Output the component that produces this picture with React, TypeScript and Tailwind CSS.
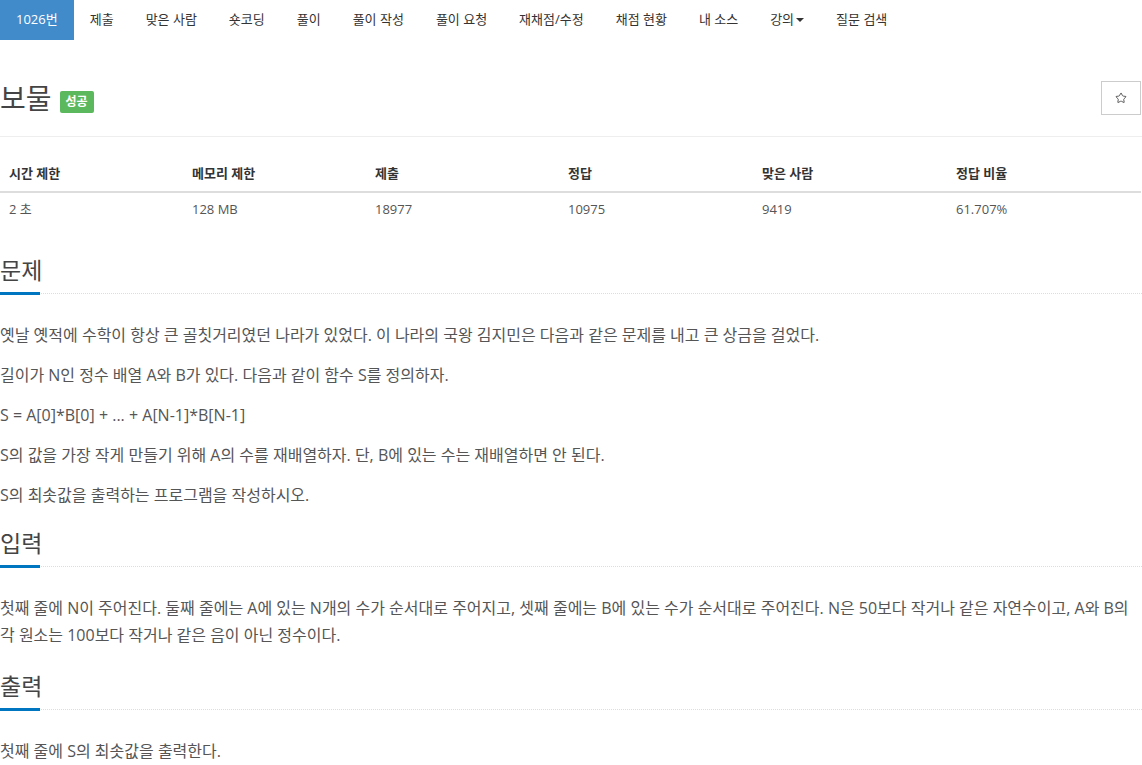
import { Star } from "lucide-react";

const navItems = [
  "제출",
  "맞은 사람",
  "숏코딩",
  "풀이",
  "풀이 작성",
  "풀이 요청",
  "재채점/수정",
  "채점 현황",
  "내 소스",
];

const stats = [
  { label: "시간 제한", value: "2 초", w: "w-[183px]" },
  { label: "메모리 제한", value: "128 MB", w: "w-[183px]" },
  { label: "제출", value: "18977", w: "w-[193px]" },
  { label: "정답", value: "10975", w: "w-[194px]" },
  { label: "맞은 사람", value: "9419", w: "w-[194px]" },
  { label: "정답 비율", value: "61.707%", w: "flex-1" },
];

function SectionTitle({ children }: { children: string }) {
  return (
    <div className="relative mb-[28px] border-b border-dotted border-[#ddd] pb-[6px]">
      <h2 className="text-[23px] leading-[33px] text-[#444]">{children}</h2>
      <span className="absolute bottom-[-2px] left-0 h-[3px] w-[40px] bg-[#0076c0]" />
    </div>
  );
}

function Para({ children }: { children: string }) {
  return <p className="mb-[13px] text-[16px] leading-[27px] text-[#555]">{children}</p>;
}

export default function App() {
  return (
    <div className="min-h-[765px] w-[1142px] bg-white font-['Open_Sans','Noto_Sans_CJK_KR',sans-serif] text-[#555]">
      <ul className="flex h-[40px] items-center text-[13px] text-[#333]">
        <li className="flex h-full items-center bg-[#428bca] px-[16px] text-white">1026번</li>
        {navItems.map((item) => (
          <li key={item} className="flex h-full items-center px-[16px]">
            {item}
          </li>
        ))}
        <li className="flex h-full items-center px-[16px]">
          강의
          <span className="ml-[2px] inline-block border-x-[4px] border-t-[4px] border-x-transparent border-t-[#333]" />
        </li>
        <li className="flex h-full items-center px-[16px]">질문 검색</li>
      </ul>

      <div className="mt-[40px] flex items-center justify-between border-b border-[#eee] pb-[20px]">
        <div className="flex items-center">
          <h1 className="text-[28px] leading-[36px] text-[#444]">보물</h1>
          <span className="ml-[8px] mt-[8px] rounded-[2px] bg-[#5cb85c] px-[6px] py-[3px] text-[12px] font-bold leading-[16px] text-white">
            성공
          </span>
        </div>
        <button className="mr-[1px] flex h-[34px] w-[40px] items-center justify-center border border-[#ccc] bg-white">
          <Star size={12} strokeWidth={1.6} className="text-[#333]" />
        </button>
      </div>

      <div className="mt-[18px] w-[1141px] text-[13px]">
        <div className="flex border-b-2 border-[#ddd]">
          {stats.map((s) => (
            <div key={s.label} className={`${s.w} px-[9px] py-[8px] font-bold leading-[20px] text-[#333]`}>
              {s.label}
            </div>
          ))}
        </div>
        <div className="flex">
          {stats.map((s) => (
            <div key={s.label} className={`${s.w} px-[9px] pb-[10px] pt-[6px] leading-[20px] text-[#555]`}>
              {s.value}
            </div>
          ))}
        </div>
      </div>

      <div className="mt-[25px]">
        <SectionTitle>문제</SectionTitle>
        <Para>옛날 옛적에 수학이 항상 큰 골칫거리였던 나라가 있었다. 이 나라의 국왕 김지민은 다음과 같은 문제를 내고 큰 상금을 걸었다.</Para>
        <Para>길이가 N인 정수 배열 A와 B가 있다. 다음과 같이 함수 S를 정의하자.</Para>
        <Para>S = A[0]*B[0] + ... + A[N-1]*B[N-1]</Para>
        <Para>S의 값을 가장 작게 만들기 위해 A의 수를 재배열하자. 단, B에 있는 수는 재배열하면 안 된다.</Para>
        <Para>S의 최솟값을 출력하는 프로그램을 작성하시오.</Para>
      </div>

      <div className="mt-[18px]">
        <SectionTitle>입력</SectionTitle>
        <Para>첫째 줄에 N이 주어진다. 둘째 줄에는 A에 있는 N개의 수가 순서대로 주어지고, 셋째 줄에는 B에 있는 수가 순서대로 주어진다. N은 50보다 작거나 같은 자연수이고, A와 B의 각 원소는 100보다 작거나 같은 음이 아닌 정수이다.</Para>
      </div>

      <div className="mt-[21px]">
        <SectionTitle>출력</SectionTitle>
        <Para>첫째 줄에 S의 최솟값을 출력한다.</Para>
      </div>
    </div>
  );
}
